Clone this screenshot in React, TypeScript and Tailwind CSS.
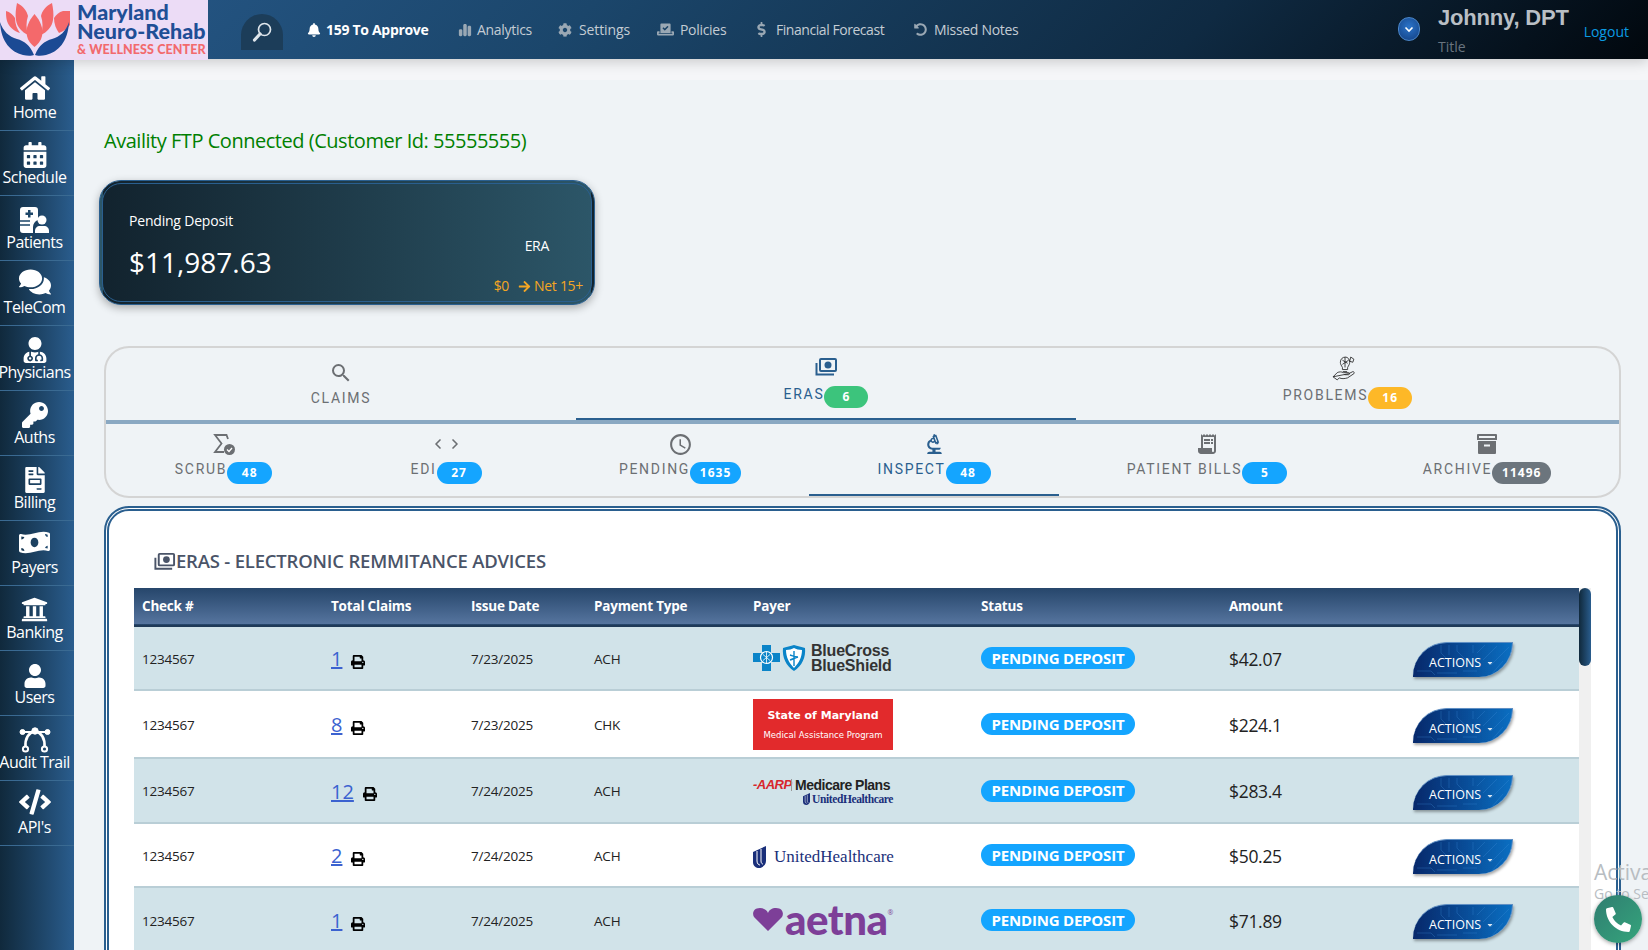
import React from 'react';
import {
  FaHome, FaCalendarAlt, FaComments, FaUserMd, FaKey, FaFileInvoice, FaMoneyBillWave,
  FaUniversity, FaUser, FaCode, FaBell, FaCog, FaVoteYea, FaDollarSign, FaUndoAlt,
  FaPrint, FaCaretDown, FaPhoneAlt, FaArrowRight,
} from 'react-icons/fa';
import { FaChartSimple } from 'react-icons/fa6';
import { MdSearch, MdOutlineAccessTime, MdOutlineBiotech, MdReceiptLong } from 'react-icons/md';
import { LuChevronLeft, LuChevronRight } from 'react-icons/lu';

function PatientsIcon() {
  return (
    <svg viewBox="0 0 29 26" className="w-[29px] h-[26px]">
      <path d="M3 0h12a3 3 0 0 1 3 3v10c-3 1-5 4-5 7v6H3a3 3 0 0 1-3-3V3a3 3 0 0 1 3-3z" fill="#fff" />
      <path d="M8 3h2.500v2.500H13V8h-2.500v2.500H8V8H5.500V5.500H8z" fill="#1d4668" />
      <path d="M0 14h10M0 18h10" stroke="#1d4668" strokeWidth="1.500" />
      <circle cx="22" cy="13" r="4.500" fill="#fff" />
      <path d="M15 26v-2c0-3 2-5 5-5h4c3 0 5 2 5 5v2z" fill="#fff" />
    </svg>
  );
}

function AuditIcon() {
  return (
    <svg viewBox="0 0 32 26" className="w-[32px] h-[26px]" fill="none" stroke="#fff">
      <path d="M4 5h24" strokeWidth="2" />
      <path d="M16 4C9 6 6 12 6.500 20M16 4c7 2 10 8 9.500 16" strokeWidth="2.600" />
      <circle cx="3.500" cy="5" r="2.500" fill="#fff" />
      <circle cx="28.500" cy="5" r="2.500" fill="#fff" />
      <circle cx="16" cy="4" r="3.200" fill="#fff" />
      <circle cx="6.500" cy="22" r="2.600" strokeWidth="2" />
      <circle cx="25.500" cy="22" r="2.600" strokeWidth="2" />
    </svg>
  );
}

const navItems = [
  { label: 'Home', icon: <FaHome size={30} /> },
  { label: 'Schedule', icon: <FaCalendarAlt size={26} /> },
  { label: 'Patients', icon: <PatientsIcon /> },
  { label: 'TeleCom', icon: <FaComments size={32} /> },
  { label: 'Physicians', icon: <FaUserMd size={26} /> },
  { label: 'Auths', icon: <FaKey size={26} /> },
  { label: 'Billing', icon: <FaFileInvoice size={26} /> },
  { label: 'Payers', icon: <FaMoneyBillWave size={31} /> },
  { label: 'Banking', icon: <FaUniversity size={27} /> },
  { label: 'Users', icon: <FaUser size={24} /> },
  { label: 'Audit Trail', icon: <AuditIcon /> },
  { label: "API's", icon: <FaCode size={32} /> },
];

function LotusLogo() {
  return (
    <svg viewBox="0 0 70 59" className="w-[70px] h-[59px] shrink-0">
      <path d="M34.500 14c6 7 9 14 7.500 22-1 5-4 8-7.500 11-3.500-3-6.500-6-7.500-11-1.500-8 1.500-15 7.500-22z" fill="#f4696b" />
      <path d="M17 3c6 3 10 8 11 13-2 6-2 12 0 19-6-3-11-8-12-15-1-6 0-12 1-17z" fill="#f4696b" />
      <path d="M52 3c-6 3-10 8-11 13 2 6 2 12 0 19 6-3 11-8 12-15 1-6 0-12-1-17z" fill="#f4696b" />
      <path d="M6 11c4 1 7 4 9 7 0 6 2 11 5 15-6-2-11-6-13-12-1-3-1-7-1-10z" fill="#f4696b" />
      <path d="M63 11c-4 1-7 4-9 7 0 6 2 11 5 15 6-2 11-6 13-12 1-3 1-7 1-10z" fill="#f4696b" />
      <path d="M0 22c3 9 9 15 17 17 7 2 13 6 17 16-2 1-7 1-11 0C11 52 1 42 0 22z" fill="#1b4a94" />
      <path d="M69 22c-3 9-9 15-17 17-7 2-13 6-17 16 2 1 7 1 11 0 12-3 22-13 23-33z" fill="#1b4a94" />
    </svg>
  );
}

function TopLink({ icon, label, className }: { icon: React.ReactNode; label: string; className: string }) {
  return (
    <div className={`flex items-center text-[14px] text-[#c4ccd4] ${className}`}>
      <span className="text-[#9aa8b4] flex items-center">{icon}</span>
      <span>{label}</span>
    </div>
  );
}

function Header() {
  return (
    <header className="h-[59px] flex items-stretch bg-[linear-gradient(135deg,#27598a_0%,#1b466b_35%,#0f2a42_72%,#01070d_100%)] shadow-[0_3px_12px_rgba(0,0,0,0.18)] relative z-10">
      <div className="w-[208px] h-[60px] bg-[#ecdcf6] flex shrink-0">
        <LotusLogo />
        <div className="ml-[7px] font-['Lato',sans-serif] font-black whitespace-nowrap">
          <div className="text-[21.500px] text-[#1f4f96] leading-[19px] mt-[3px]">Maryland</div>
          <div className="text-[21.500px] text-[#1f4f96] leading-[19px]">Neuro-Rehab</div>
          <div className="text-[12.500px] text-[#f26a6d] leading-[14px] mt-[2px] tracking-[0.1px]">&amp; WELLNESS CENTER</div>
        </div>
      </div>
      <div className="w-[42px] h-[36px] mt-[14px] ml-[33px] bg-[#1c3d59] rounded-t-[21px] flex items-center justify-center">
        <svg viewBox="0 0 22 22" className="w-[22px] h-[22px]" fill="none" stroke="#dfe6ec">
          <circle cx="13.500" cy="8.500" r="6" strokeWidth="1.700" />
          <path d="M9 13 3.500 19" strokeWidth="3.200" strokeLinecap="round" />
        </svg>
      </div>
      <div className="flex items-center ml-[24px] font-['Open_Sans',sans-serif] relative">
        <div className="flex items-center text-white font-bold text-[14px] tracking-[-0.3px] w-[151px]">
          <FaBell size={14} className="mr-[5px]" />
          <span>159 To Approve</span>
        </div>
        <TopLink icon={<FaChartSimple size={14} className="mr-[5px]" />} label="Analytics" className="w-[100px] tracking-[-0.3px]" />
        <TopLink icon={<FaCog size={14} className="mr-[7px]" />} label="Settings" className="w-[99px] tracking-[-0.1px]" />
        <TopLink icon={<FaVoteYea size={17} className="mr-[6px]" />} label="Policies" className="w-[97px] tracking-[-0.3px]" />
        <TopLink icon={<FaDollarSign size={15} className="mr-[7px]" />} label="Financial Forecast" className="w-[160px] tracking-[-0.45px]" />
        <TopLink icon={<FaUndoAlt size={13} className="mr-[7px]" />} label="Missed Notes" className="w-[120px] tracking-[-0.3px]" />
      </div>
      <div className="ml-auto flex items-start relative w-[250px] shrink-0">
        <div className="mt-[17px] w-[22px] h-[24px] rounded-full bg-[radial-gradient(circle_at_50%_40%,#2b74c9,#123f82)] border border-[#4a86c8] flex items-center justify-center">
          <svg viewBox="0 0 12 12" className="w-[12px] h-[12px]"><path d="M2.500 4.500 6 8l3.500-3.500" fill="none" stroke="#fff" strokeWidth="1.600" /></svg>
        </div>
        <div className="ml-[18px]">
          <div className="font-['Liberation_Sans',sans-serif] font-bold text-[22px] leading-[24px] mt-[6px] text-[#b9bfc5] tracking-[-0.2px] whitespace-nowrap">Johnny, DPT</div>
          <div className="font-['Open_Sans',sans-serif] text-[14px] leading-[18px] mt-[8px] text-[#69747f]">Title</div>
        </div>
        <div className="font-['Open_Sans',sans-serif] text-[14px] text-[#0b9be3] mt-[21px] ml-[15px]">Logout</div>
      </div>
    </header>
  );
}

function Sidebar() {
  return (
    <aside className="w-[74px] shrink-0 pt-[7px] bg-gradient-to-r from-[#10293c] to-[#2a5d8e] font-['Open_Sans',sans-serif]">
      {navItems.map((item) => (
        <div key={item.label} className="h-[65px] pr-[5px] border-b border-[#3a6a92] flex flex-col items-center text-white">
          <div className="h-[28px] mt-[9px] flex items-end justify-center">{item.icon}</div>
          <div className="text-[16px] leading-[20px] -mt-[1px] tracking-[-0.5px] whitespace-nowrap">{item.label}</div>
        </div>
      ))}
    </aside>
  );
}

function PaymentsIcon({ className }: { className: string }) {
  return (
    <svg viewBox="0 0 24 24" className={className} fill="none" stroke="currentColor">
      <rect x="6" y="4" width="16" height="12" rx="1" strokeWidth="2" />
      <circle cx="14" cy="10" r="3.500" fill="currentColor" stroke="none" />
      <path d="M2.500 8v11.500H20" strokeWidth="2" />
    </svg>
  );
}

function ArchiveIcon() {
  return (
    <svg viewBox="0 0 20 20" className="w-[20px] h-[20px]">
      <path d="M1 0h18a1 1 0 0 1 1 1v5H0V1a1 1 0 0 1 1-1z" fill="#6c6f73" />
      <rect x="2" y="2" width="16" height="2" fill="#eff3f6" />
      <path d="M1 7h18v12a1 1 0 0 1-1 1H2a1 1 0 0 1-1-1z" fill="#6c6f73" />
      <rect x="7" y="10.500" width="6" height="2" fill="#eff3f6" />
    </svg>
  );
}

function Badge({ value, className }: { value: string; className: string }) {
  return (
    <span className={`h-[22px] rounded-[11px] flex items-center justify-center text-white font-bold text-[12px] tracking-[1px] ${className}`}>
      {value}
    </span>
  );
}

function SigmaCheckIcon() {
  return (
    <svg viewBox="0 0 24 24" className="w-[24px] h-[24px]">
      <path d="M16 7 14.500 3H3l6.500 8.500L3 20h9" fill="none" stroke="#6c6f73" strokeWidth="1.800" />
      <circle cx="17.500" cy="17.500" r="5.500" fill="#6c6f73" />
      <path d="m15 17.500 2 2 3-3.500" fill="none" stroke="#fff" strokeWidth="1.300" />
    </svg>
  );
}

function HandBulbIcon() {
  return (
    <svg viewBox="0 0 26 26" className="w-[27px] h-[27px] -ml-[6px]" fill="none" stroke="#222" strokeWidth="0.800">
      <path d="M14 2c-3 0-5 2-5 5 0 2 1 3 2 5l0 2h5v-2c1-2 2-3 2-5 0-3-2-5-4-5z" />
      <path d="M11 5l5 3M11 9l6-4M13.500 2v10M11.500 16h4M19 2l3 2-1 3-3-1z" />
      <path d="M2 21l4-4c2-1 4-1 6 0h5c1 0 1 2 0 2h-4M17 18l4-2c1 0 2 1 1 2l-6 4c-3 1-6 1-8 0l-2 2-4-3z" />
    </svg>
  );
}

const labelClass = "font-['Roboto',sans-serif] text-[14px] leading-[14px] tracking-[1.7px] whitespace-nowrap";

function SubTab({ icon, label, badge, badgeClass, active }: {
  icon: React.ReactNode; label: string; badge: string; badgeClass: string; active?: boolean;
}) {
  return (
    <div className={`h-[72px] pt-[8px] flex flex-col items-center ${active ? 'border-b-2 border-[#2a5f8f] text-[#2a5f8f]' : 'text-[#6c6f73]'}`}>
      <div className="h-[24px] flex items-center justify-center">{icon}</div>
      <div className="flex items-start mt-[6px]">
        <span className={labelClass}>{label}</span>
        <Badge value={badge} className={badgeClass} />
      </div>
    </div>
  );
}

function TabsPanel() {
  return (
    <div className="ml-[5px] w-[1517px] h-[152px] border-2 border-[#d4d4d4] rounded-[25px] overflow-hidden">
      <div className="grid grid-cols-[470px_500px_1fr] h-[72px]">
        <div className="pt-[13px] flex flex-col items-center text-[#6c6f73]">
          <MdSearch size={24} />
          <span className={`${labelClass} mt-[6px]`}>CLAIMS</span>
        </div>
        <div className="pt-[7px] flex flex-col items-center border-b-2 border-[#2a5f8f] text-[#2a5f8f]">
          <PaymentsIcon className="w-[24px] h-[24px]" />
          <div className="flex items-start mt-[7px]">
            <span className={`${labelClass} mt-[1px]`}>ERAS</span>
            <Badge value="6" className="w-[44px] bg-[#3cc47c]" />
          </div>
        </div>
        <div className="pt-[7px] flex flex-col items-center text-[#6c6f73]">
          <HandBulbIcon />
          <div className="flex items-start mt-[5px]">
            <span className={`${labelClass} mt-[1px]`}>PROBLEMS</span>
            <Badge value="16" className="w-[44px] bg-[#fdb827]" />
          </div>
        </div>
      </div>
      <div className="h-[4px] bg-[#8aa8c2]" />
      <div className="grid grid-cols-[235px_210px_258px_250px_296px_1fr]">
        <SubTab icon={<SigmaCheckIcon />} label="SCRUB" badge="48" badgeClass="w-[45px] bg-[#14a5ff]" />
        <SubTab
          icon={<span className="flex items-center"><LuChevronLeft size={16} strokeWidth={2.500} /><LuChevronRight size={16} strokeWidth={2.500} className="ml-[1px]" /></span>}
          label="EDI" badge="27" badgeClass="w-[45px] bg-[#14a5ff]"
        />
        <SubTab icon={<MdOutlineAccessTime size={25} />} label="PENDING" badge="1635" badgeClass="w-[51px] bg-[#14a5ff]" />
        <SubTab icon={<MdOutlineBiotech size={25} />} label="INSPECT" badge="48" badgeClass="w-[45px] bg-[#14a5ff]" active />
        <SubTab icon={<MdReceiptLong size={24} />} label="PATIENT BILLS" badge="5" badgeClass="w-[45px] bg-[#14a5ff]" />
        <SubTab icon={<ArchiveIcon />} label="ARCHIVE" badge="11496" badgeClass="w-[59px] bg-[#6c757d]" />
      </div>
    </div>
  );
}

function BcbsLogo() {
  return (
    <div className="flex items-center w-[140px]">
      <svg viewBox="0 0 54 28" className="w-[54px] h-[28px] shrink-0">
        <path d="M9 1h9v8h9v9h-9v9H9v-9H0V9h9z" fill="#0a84c8" />
        <circle cx="13.500" cy="13.500" r="6" fill="none" stroke="#fff" strokeWidth="1.200" />
        <path d="M10 10.500l7 6M17 10.500l-7 6M13.500 8v11" stroke="#fff" strokeWidth="0.800" />
        <path d="M30 4c3-1 8-2 11-3 3 1 8 2 11 3 1 9-3 18-11 23-8-5-12-14-11-23z" fill="#0a84c8" />
        <path d="M33 6c3 0 6-1 8-2 2 1 5 2 8 2 0 7-3 13-8 18-5-5-8-11-8-18z" fill="#fff" />
        <path d="M41 7v15M37 11c3 1 5 2 8 2M37 16c3-1 5-2 8-3" stroke="#0a84c8" strokeWidth="1.400" fill="none" />
      </svg>
      <div className="ml-[4px] font-['Liberation_Sans',sans-serif] font-bold text-[#333] text-[16px] leading-[15px] tracking-[-0.2px]">
        <div>BlueCross</div>
        <div>BlueShield</div>
      </div>
    </div>
  );
}

function MarylandLogo() {
  return (
    <div className="w-[140px] h-[51px] bg-[#e22a2c] text-white text-center font-['DejaVu_Sans',sans-serif] flex flex-col justify-center">
      <div className="font-bold text-[11px] leading-[14px]">State of Maryland</div>
      <div className="text-[8.500px] leading-[10px] mt-[7px] whitespace-nowrap">Medical Assistance Program</div>
    </div>
  );
}

function UhcMark({ className }: { className: string }) {
  return (
    <svg viewBox="0 0 13 22" className={className}>
      <path d="M0 6 13 0v15c0 4-4 7-7 7-3 0-6-2-6-6z" fill="#1a2f7a" />
      <path d="M4 5v10c0 3 2 4 3 4M8 3v12c0 2 1 3 2 3" fill="none" stroke="#fff" strokeWidth="1" />
    </svg>
  );
}

function AarpLogo() {
  return (
    <div className="w-[140px] whitespace-nowrap">
      <div className="flex items-center font-['Liberation_Sans',sans-serif] font-bold text-[13px] leading-[16px]">
        <span className="text-[#d8262c] italic tracking-[-0.5px] w-[38px]">-AARP</span>
        <span className="w-px h-[12px] bg-[#999] mr-[3px]" />
        <span className="text-[#222] text-[14px] tracking-[-0.5px]">Medicare Plans</span>
      </div>
      <div className="flex items-center justify-end h-[12px]">
        <UhcMark className="w-[7px] h-[12px] mr-[2px]" />
        <span className="font-['Liberation_Serif',serif] text-[#1a2f7a] text-[11.500px] leading-[12px] font-bold tracking-[-0.4px]">UnitedHealthcare</span>
      </div>
    </div>
  );
}

function UhcLogo() {
  return (
    <div className="flex items-center w-[140px] mt-[3px] whitespace-nowrap">
      <UhcMark className="w-[13px] h-[22px] shrink-0" />
      <span className="ml-[8px] font-['Liberation_Serif',serif] text-[#1a2f7a] text-[17px] leading-[22px]">UnitedHealthcare</span>
    </div>
  );
}

function AetnaLogo() {
  return (
    <div className="flex items-center w-[140px] -mt-[3px]">
      <svg viewBox="0 0 30 26" className="w-[30px] h-[26px] shrink-0">
        <path d="M15 25 1 11C-1 8 0 2 7 2c4 0 7 2 8 5 1-3 4-5 8-5 7 0 8 6 6 9z" fill="#7d3f98" />
      </svg>
      <span className="ml-[2px] font-['Lato',sans-serif] font-black text-[42px] leading-[30px] text-[#7d3f98] tracking-[-0.5px]">aetna</span>
      <span className="text-[7px] text-[#7d3f98] self-start mt-[4px]">®</span>
    </div>
  );
}

const rows = [
  { total: '1', date: '7/23/2025', type: 'ACH', logo: <BcbsLogo />, amount: '$42.07', rowClass: 'h-[64px] bg-[#d1e3e9]' },
  { total: '8', date: '7/23/2025', type: 'CHK', logo: <MarylandLogo />, amount: '$224.1', rowClass: 'h-[68px] bg-white' },
  { total: '12', date: '7/24/2025', type: 'ACH', logo: <AarpLogo />, amount: '$283.4', rowClass: 'h-[65px] bg-[#d1e3e9]' },
  { total: '2', date: '7/24/2025', type: 'ACH', logo: <UhcLogo />, amount: '$50.25', rowClass: 'h-[64px] bg-white' },
  { total: '1', date: '7/24/2025', type: 'ACH', logo: <AetnaLogo />, amount: '$71.89', rowClass: 'h-[66px] bg-[#d1e3e9]' },
];

function ActionsButton() {
  return (
    <div className="relative mt-[3px] w-[100px] h-[35px] rounded-tl-[34px] rounded-br-[34px] bg-gradient-to-r from-[#08296b] to-[#0a6fc2] shadow-[1px_2px_3px_rgba(0,0,0,0.35)] border-t border-r border-[#5f8fc4] overflow-hidden flex items-center pl-[16px] pt-[6px] text-white font-['Open_Sans',sans-serif] text-[12.500px]">
      <svg viewBox="0 0 100 35" className="absolute inset-0 w-[100px] h-[35px]" fill="none" stroke="#3f8fd8" strokeWidth="0.500" opacity="0.6">
        <path d="M28 2v8l6 6M36 2v10M44 2v6l8 8h12M60 2v8M72 2l-8 8M84 3 70 17M96 4 78 22M90 18l-12 14M4 28h14l4 4M24 30h20M50 28h14" />
      </svg>
      <span className="relative">ACTIONS</span>
      <FaCaretDown size={8} className="relative ml-[5px] text-[#d5e4f2]" />
    </div>
  );
}

function ErasTable() {
  const heads = ['Check #', 'Total Claims', 'Issue Date', 'Payment Type', 'Payer', 'Status', 'Amount', ''];
  return (
    <div className="flex ml-[25px] w-[1457px]">
      <table className="w-[1445px] table-fixed border-collapse font-['Open_Sans',sans-serif] shrink-0">
        <colgroup>
          <col className="w-[189px]" />
          <col className="w-[140px]" />
          <col className="w-[123px]" />
          <col className="w-[159px]" />
          <col className="w-[228px]" />
          <col className="w-[248px]" />
          <col className="w-[184px]" />
          <col className="w-[174px]" />
        </colgroup>
        <thead>
          <tr className="h-[38px] bg-gradient-to-b from-[#26466b] to-[#56759f] border-b-2 border-[#1f3a58]">
            {heads.map((h, i) => (
              <th key={i} className="text-left px-[8px] text-white font-bold text-[13.500px] tracking-[-0.2px]">{h}</th>
            ))}
          </tr>
        </thead>
        <tbody className="text-[#222]">
          {rows.map((r, i) => (
            <tr key={i} className={`${r.rowClass} border-b-2 border-[#b9ced6]`}>
              <td className="px-[8px] pt-[2px] text-[13.500px] tracking-[-0.2px]">1234567</td>
              <td className="px-[8px] pt-[2px]">
                <div className="flex items-center">
                  <span className="text-[20px] leading-[24px] text-[#3b62d0] underline">{r.total}</span>
                  <FaPrint size={14} className="ml-[9px] mt-[5px] text-black" />
                </div>
              </td>
              <td className="px-[8px] pt-[2px] text-[13.500px] tracking-[-0.2px]">{r.date}</td>
              <td className="px-[8px] pt-[2px] text-[13.500px] tracking-[-0.2px]">{r.type}</td>
              <td className="px-[8px]">{r.logo}</td>
              <td className="px-[8px]">
                <div className="w-[154px] h-[22px] rounded-full bg-[#14a5ff] flex items-center justify-center text-white font-bold text-[15px] tracking-[-0.2px] whitespace-nowrap">PENDING DEPOSIT</div>
              </td>
              <td className="px-[8px] pt-[2px] text-[17.500px] tracking-[-0.3px]">{r.amount}</td>
              <td className="px-[8px]"><ActionsButton /></td>
            </tr>
          ))}
        </tbody>
      </table>
      <div className="w-[12px] bg-[#f0f0f0] shrink-0">
        <div className="h-[78px] rounded-[6px] bg-gradient-to-r from-[#10293c] to-[#2a5d8e]" />
      </div>
    </div>
  );
}

export default function App() {
  return (
    <div className="relative w-[1648px] h-[950px] overflow-hidden bg-[#eff3f6] font-['Open_Sans',sans-serif]">
      <Header />
      <div className="flex h-[891px]">
        <Sidebar />
        <main className="flex-1 min-w-0 pl-[25px] bg-[linear-gradient(#f5f6f8_0,#f5f6f8_21px,#eff3f6_21px)]">
          <div className="ml-[5px] mt-[68px] h-[28px] text-[20px] leading-[28px] text-[#008000] tracking-[-0.47px]">
            Availity FTP Connected (Customer Id: 55555555)
          </div>
          <div className="mt-[25px] w-[496px] h-[125px] rounded-[22px] border-[4px] border-double border-[#2a5f8f] bg-gradient-to-r from-[#12232e] to-[#2c5668] shadow-[0_3px_8px_rgba(0,0,0,0.3)] text-white flex justify-between">
            <div className="pl-[26px] pt-[27px]">
              <div className="text-[14px] leading-[20px] tracking-[-0.2px]">Pending Deposit</div>
              <div className="text-[28px] leading-[40px] mt-[11px]">$11,987.63</div>
            </div>
            <div className="pr-[8px] flex flex-col items-end">
              <div className="text-[14px] leading-[20px] mt-[52px] mr-[34px] tracking-[-0.3px]">ERA</div>
              <div className="flex items-center text-[14px] leading-[20px] mt-[20px] text-[#f5a623] tracking-[-0.3px]">
                $0<FaArrowRight size={13} className="mr-[3px] ml-[9px]" />Net 15+
              </div>
            </div>
          </div>
          <div className="mt-[41px]">
            <TabsPanel />
          </div>
          <div className="ml-[5px] mt-[8px] w-[1517px] h-[500px] rounded-[25px] border-[5px] border-double border-[#2a5f8f] bg-white">
            <div className="flex items-center h-[26px] mt-[37px] mb-[14px] pl-[44px] text-[#4a5468]">
              <PaymentsIcon className="w-[23px] h-[23px] shrink-0" />
              <h2 className="text-[18.500px] leading-[26px] font-semibold tracking-[-0.2px]">ERAS - ELECTRONIC REMMITANCE ADVICES</h2>
            </div>
            <ErasTable />
          </div>
        </main>
      </div>
      <div className="absolute left-[1594px] top-[859px] text-[#b8bdc2] whitespace-nowrap">
        <div className="text-[21px] leading-[26px]">Activate Windows</div>
        <div className="text-[14px] leading-[18px]">Go to Settings</div>
      </div>
      <div className="absolute left-[1594px] top-[895px] w-[48px] h-[48px] rounded-full bg-gradient-to-br from-[#2f7d70] to-[#35a57c] shadow-[0_1px_4px_rgba(0,0,0,0.4)] flex items-center justify-center text-white">
        <FaPhoneAlt size={25} />
      </div>
    </div>
  );
}
